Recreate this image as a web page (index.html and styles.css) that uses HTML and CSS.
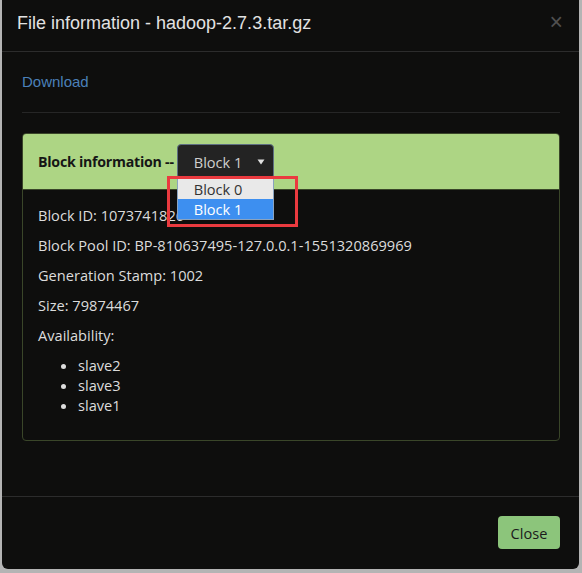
FILE: index.html
```html
<!DOCTYPE html>
<html>
<head>
<meta charset="utf-8">
<link rel="stylesheet" href="styles.css">
</head>
<body>
<div class="modal">
  <div class="modal-header">
    <h4 class="modal-title">File information - hadoop-2.7.3.tar.gz</h4>
    <span class="close">&times;</span>
  </div>
  <div class="modal-body">
    <a class="download" href="#">Download</a>
    <hr class="sep">
    <div class="panel">
      <div class="panel-heading">
        <span class="heading-text">Block information --</span>
        <div class="select-wrap">
          <div class="select">
            <span>Block 1</span>
            <svg class="caret" width="8" height="6" viewBox="0 0 8 6"><path d="M0.5 0.5 L7.5 0.5 L4 5.5 Z" fill="#e0e0e0"/></svg>
          </div>
          <div class="dropdown">
            <div class="option">Block 0</div>
            <div class="option selected">Block 1</div>
          </div>
          <div class="highlight"></div>
        </div>
      </div>
      <div class="panel-body">
        <p>Block ID: 1073741826</p>
        <p>Block Pool ID: BP-810637495-127.0.0.1-1551320869969</p>
        <p>Generation Stamp: 1002</p>
        <p>Size: 79874467</p>
        <p>Availability:</p>
        <ul>
          <li>slave2</li>
          <li>slave3</li>
          <li>slave1</li>
        </ul>
      </div>
    </div>
  </div>
  <div class="modal-footer">
    <button class="btn-close">Close</button>
  </div>
</div>
</body>
</html>
```
FILE: styles.css
```css
html, body {
  margin: 0;
  padding: 0;
}
body {
  width: 582px;
  height: 573px;
  background: #b4b4b4;
  overflow: hidden;
  font-family: "Open Sans", "Noto Sans", sans-serif;
}
.modal {
  margin-left: 2px;
  width: 577px;
  height: 569px;
  background: #0e0e0d;
  border-radius: 0 0 6px 6px;
  display: flex;
  flex-direction: column;
}
.modal-header {
  box-sizing: border-box;
  height: 52px;
  border-bottom: 1px solid #2c2c2c;
  padding: 13px 16px 0 15px;
  display: flex;
  justify-content: space-between;
  align-items: flex-start;
}
.modal-title {
  margin: 0;
  font-family: "Liberation Sans", Arial, sans-serif;
  font-weight: normal;
  font-size: 18px;
  line-height: 21px;
  color: #e2e2e2;
}
.close {
  font-family: "Liberation Sans", Arial, sans-serif;
  font-size: 23px;
  font-weight: normal;
  line-height: 21px;
  color: #505050;
  margin-top: -1px;
}
.modal-body {
  flex: 1;
  padding: 20px 19px 0 20px;
}
.download {
  display: block;
  font-family: "Liberation Sans", Arial, sans-serif;
  font-size: 15px;
  line-height: 20px;
  color: #4b80b9;
  text-decoration: none;
}
.sep {
  margin: 20px 0 20px;
  border: 0;
  border-top: 1px solid #262626;
  height: 0;
}
.panel {
  border: 1px solid #3a4629;
  border-radius: 4px;
  color: #dcdcdc;
}
.panel-heading {
  background: #add584;
  border-bottom: 1px solid #3a4629;
  border-radius: 3px 3px 0 0;
  padding: 10px 15px;
  display: flex;
  align-items: center;
}
.heading-text {
  font-weight: bold;
  font-size: 14.2px;
  letter-spacing: -0.25px;
  color: #161616;
  margin-right: 3px;
}
.select-wrap {
  position: relative;
}
.select {
  box-sizing: border-box;
  width: 97px;
  height: 35px;
  background: #232323;
  border: 1px solid #5e6f82;
  border-radius: 4px;
  padding: 0 8px 0 16px;
  display: flex;
  align-items: center;
  justify-content: space-between;
  font-size: 14.6px;
  color: #cfcfcf;
}
.caret {
  display: block;
}
.dropdown {
  position: absolute;
  left: 0;
  top: 34px;
  box-sizing: border-box;
  width: 97px;
  border: 1px solid #8aa3bf;
  background: #e9e9e9;
}
.option {
  height: 20px;
  line-height: 20px;
  padding-left: 16px;
  font-size: 14.6px;
  color: #333;
}
.option.selected {
  background: #3d8ff0;
  color: #fff;
}
.highlight {
  position: absolute;
  left: -10px;
  top: 32px;
  width: 131px;
  height: 51px;
  box-sizing: border-box;
  border: 3px solid #ea3a3f;
}
.panel-body {
  padding: 15px;
  font-size: 14.6px;
  line-height: 20px;
}
.panel-body p {
  margin: 0 0 10px;
}
.panel-body ul {
  margin: 0 0 10px;
  padding-left: 40px;
}
.modal-footer {
  box-sizing: border-box;
  height: 73px;
  border-top: 1px solid #2c2c2c;
  padding: 19px 19px 0 20px;
  display: flex;
  justify-content: flex-end;
  align-items: flex-start;
}
.btn-close {
  width: 62px;
  height: 33px;
  background: #8cc57b;
  border: 0;
  border-radius: 4px;
  font-family: "Open Sans", "Noto Sans", sans-serif;
  font-size: 14.6px;
  color: #1b1b1b;
  padding: 0;
}
```
